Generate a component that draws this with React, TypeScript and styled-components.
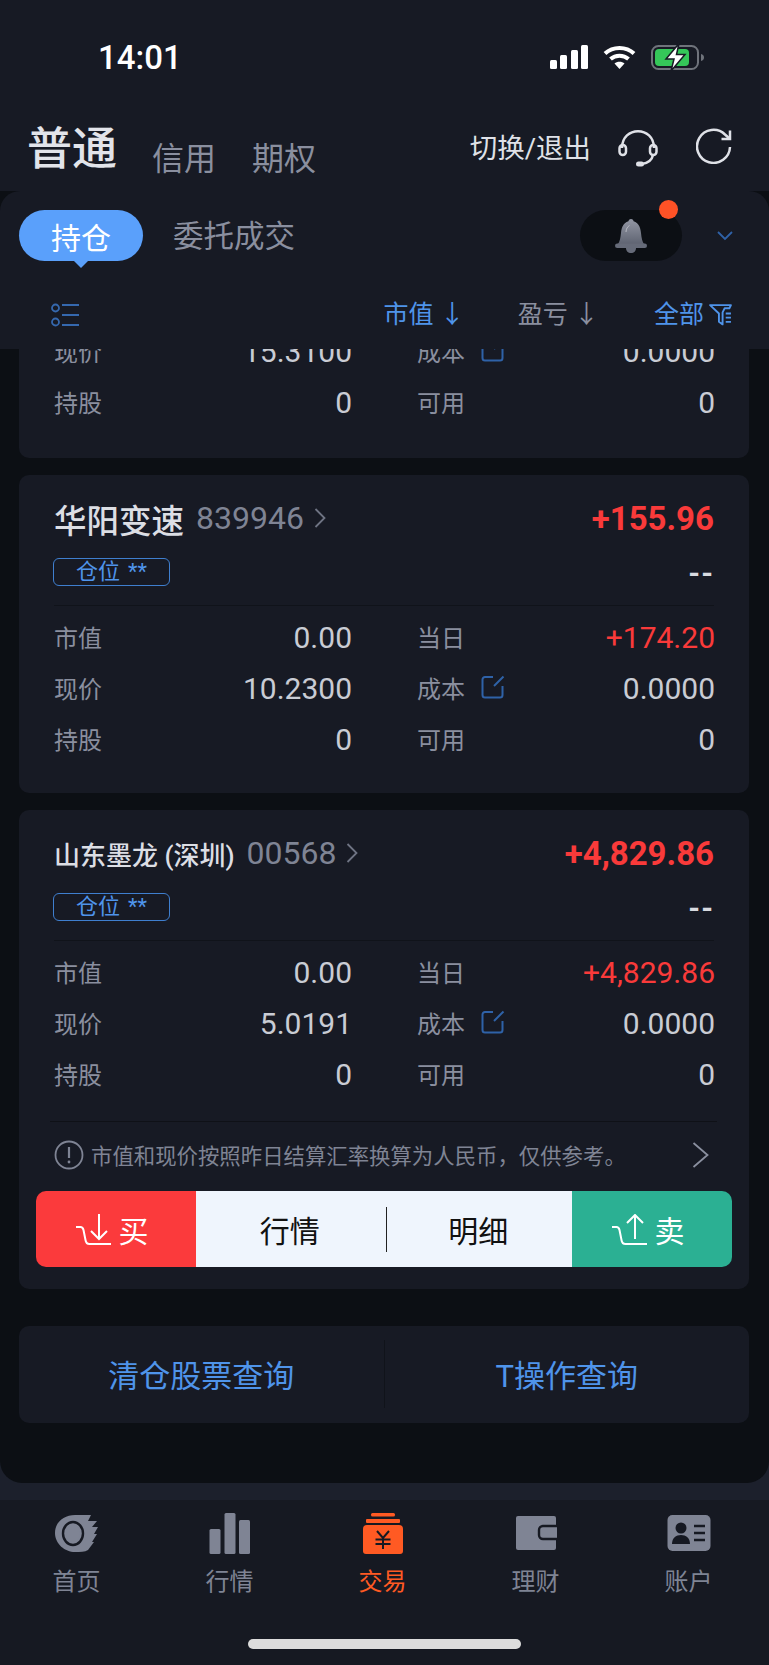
import React from "react";
import styled, { createGlobalStyle } from "styled-components";

const Global = createGlobalStyle`
  html, body { margin: 0; padding: 0; background: #171a24; }
  * { box-sizing: border-box; }
  body { font-family: "Roboto", "Noto Sans CJK SC", sans-serif; }
`;

const CJK = `"Roboto", "Noto Sans CJK SC", sans-serif`;

const Page = styled.div`
  width: 769px;
  height: 1665px;
  display: flex;
  flex-direction: column;
  overflow: hidden;
  background: #1c202c;
  font-family: ${CJK};
`;

const Top = styled.header`
  background: #171a24;
  flex: none;
`;

const StatusBar = styled.div`
  height: 114px;
  display: flex;
  align-items: center;
  justify-content: space-between;
  padding: 0 65px 0 98px;
  color: #fff;
`;

const Clock = styled.span`
  font-size: 33px;
  font-weight: 500;
`;

const StatusIcons = styled.div`
  display: flex;
  align-items: center;
  gap: 15px;
`;

const AccountBar = styled.div`
  height: 77px;
  display: flex;
  align-items: flex-start;
  padding: 9px 37px 0 27px;
`;

const MainTab = styled.span`
  font-size: 45px;
  line-height: 54px;
  font-weight: 500;
  color: #e2e4ea;
  margin-right: 35px;
`;

const SubTab = styled.span`
  font-size: 32px;
  line-height: 44px;
  margin-top: 14px;
  margin-right: 36px;
  color: #8a8f9f;
`;

const Spacer = styled.div`
  flex: 1;
`;

const SwitchLink = styled.span`
  font-size: 27.5px;
  line-height: 40px;
  margin-top: 6px;
  color: #dfe1e7;
  margin-right: 27px;
`;

const HeaderIcon = styled.svg`
  flex: none;
  margin-top: 5px;
`;

const RefreshGlyph = styled(HeaderIcon)`
  margin-left: 38px;
`;

const Body = styled.div`
  flex: none;
  height: 1292px;
  background: #0c0f14;
  border-radius: 0 0 22px 22px;
  display: flex;
  flex-direction: column;
  overflow: hidden;
`;

const StickyPanel = styled.div`
  flex: none;
  height: 158px;
  background: #171a24;
  border-radius: 20px 20px 0 0;
  position: relative;
  z-index: 1;
`;

const TabRow = styled.div`
  height: 89px;
  padding: 19px 0 0 19px;
  display: flex;
  align-items: flex-start;
`;

const ActivePill = styled.div`
  width: 124px;
  height: 51px;
  border-radius: 26px;
  background: #5aa0fb;
  color: #fff;
  font-size: 30px;
  display: flex;
  align-items: center;
  justify-content: center;
  position: relative;
  &::after {
    content: "";
    position: absolute;
    left: 54px;
    bottom: -7px;
    border-left: 8px solid transparent;
    border-right: 8px solid transparent;
    border-top: 8px solid #5aa0fb;
  }
`;

const PlainTab = styled.span`
  margin-left: 30px;
  font-size: 30.5px;
  line-height: 54px;
  color: #8a8f9f;
`;

const BellPill = styled.div`
  width: 102px;
  height: 51px;
  border-radius: 26px;
  background: #0c0f14;
  display: flex;
  align-items: center;
  justify-content: center;
  position: relative;
`;

const Dot = styled.span`
  position: absolute;
  right: 4px;
  top: -10px;
  width: 19px;
  height: 19px;
  border-radius: 50%;
  background: #ff5226;
`;

const Caret = styled.svg`
  margin: 21px 36px 0 35px;
  flex: none;
`;

const SortRow = styled.div`
  height: 69px;
  display: flex;
  align-items: center;
  padding: 0 37px 0 51px;
`;

const SortItem = styled.span<{ $active?: boolean; $gap?: number }>`
  font-size: 25px;
  line-height: 36px;
  color: ${(p) => (p.$active ? "#4f94ea" : "#8a8f9f")};
  margin-right: ${(p) => p.$gap ?? 0}px;
  display: flex;
  align-items: center;
`;

const FilterGlyph = styled.svg`
  margin-left: 5px;
`;

const List = styled.div`
  flex: 1;
  min-height: 0;
  overflow: hidden;
  padding: 0 20px 0 19px;
  display: flex;
  flex-direction: column;
`;

const Card = styled.section<{ $clipped?: boolean }>`
  flex: none;
  background: #171a24;
  border-radius: 10px;
  padding: ${(p) => (p.$clipped ? "0 35px 30px" : "26px 35px 0")};
  margin-top: ${(p) => (p.$clipped ? "-23px" : "0")};
  margin-bottom: 17px;
`;

const TitleRow = styled.div`
  height: 34px;
  display: flex;
  align-items: center;
`;

const StockName = styled.span<{ $small?: boolean }>`
  font-size: ${(p) => (p.$small ? 26 : 32.5)}px;
  font-weight: 500;
  color: #dcdee4;
  margin-right: 12px;
  white-space: nowrap;
`;

const StockCode = styled.span`
  font-size: 32px;
  color: #7f8494;
  margin-right: 10px;
`;

const Profit = styled.span`
  margin-left: auto;
  font-size: 33px;
  font-weight: 700;
  color: #f93a3a;
`;

const BadgeRow = styled.div`
  height: 28px;
  margin-top: 23px;
  display: flex;
  align-items: center;
  justify-content: space-between;
`;

const Badge = styled.span`
  width: 117px;
  height: 28px;
  border: 1px solid #3f7fcf;
  border-radius: 6px;
  color: #4f94ea;
  font-size: 22px;
  line-height: 25px;
  display: flex;
  justify-content: center;
  gap: 8px;
  margin-left: -1px;
`;

const Dashes = styled.span`
  font-size: 30px;
  font-weight: 700;
  letter-spacing: 1px;
  color: #d8dae0;
`;

const Rule = styled.div`
  height: 1px;
  background: #10131a;
  margin-top: 19px;
  margin-bottom: 6px;
`;

const Grid = styled.div<{ $flush?: boolean }>`
  display: grid;
  grid-template-columns: 298px 298px;
  column-gap: 65px;
  padding-bottom: ${(p) => (p.$flush ? 0 : 28)}px;
`;

const Cell = styled.div`
  height: 51px;
  display: flex;
  align-items: center;
  justify-content: space-between;
`;

const Label = styled.span`
  font-size: 24px;
  color: #8a8f9f;
  display: flex;
  align-items: center;
  gap: 16px;
  padding-bottom: 3px;
`;

const Value = styled.span<{ $up?: boolean }>`
  font-size: 30px;
  color: ${(p) => (p.$up ? "#f93a3a" : "#c9ccd4")};
`;

const NoticeRule = styled.div`
  height: 1px;
  background: #0f1117;
  margin: -7px -3px 0 -4px;
`;

const Notice = styled.div`
  height: 65px;
  display: flex;
  align-items: center;
  color: #7f8494;
  font-size: 21.4px;
  padding-right: 5px;
`;

const NoticeText = styled.span`
  margin-left: 7px;
  flex: 1;
  white-space: nowrap;
`;

const ActionBar = styled.div`
  display: flex;
  height: 76px;
  margin: 4px -18px 0 -18px;
  border-radius: 10px;
  overflow: hidden;
  font-size: 30px;
`;

const TradeButton = styled.div<{ $kind: "buy" | "sell" }>`
  flex: none;
  width: 160px;
  background: ${(p) => (p.$kind === "buy" ? "#fb3a3c" : "#2bb093")};
  color: #fff;
  display: flex;
  align-items: center;
  justify-content: center;
  gap: 8px;
  padding-right: 8px;
`;

const Middle = styled.div`
  flex: 1;
  background: #eff5fd;
  display: flex;
  align-items: center;
  color: #111;
`;

const MiddleItem = styled.span`
  flex: 1;
  text-align: center;
`;

const MiddleRule = styled.span`
  width: 1px;
  height: 45px;
  background: #222;
  flex: none;
  margin: 0 -2px 0 2px;
`;

const CardFoot = styled.div`
  height: 22px;
`;

const QueryCard = styled.div`
  flex: none;
  height: 97px;
  margin-top: 20px;
  padding-bottom: 2px;
  background: #171a24;
  border-radius: 10px;
  display: flex;
  align-items: center;
  color: #4f94ea;
  font-size: 31px;
`;

const QueryItem = styled.span`
  flex: 1;
  text-align: center;
`;

const QueryRule = styled.span`
  width: 1px;
  height: 68px;
  background: #10131a;
  flex: none;
`;

const Gutter = styled.div`
  flex: none;
  height: 17px;
`;

const TabBar = styled.nav`
  flex: 1;
  background: #161922;
  display: flex;
  flex-direction: column;
`;

const TabItems = styled.div`
  display: grid;
  grid-template-columns: repeat(5, 1fr);
  padding: 11px 4px 0 0;
`;

const TabItem = styled.div<{ $active?: boolean }>`
  display: flex;
  flex-direction: column;
  align-items: center;
  color: ${(p) => (p.$active ? "#ff5a23" : "#7f8494")};
  font-size: 24px;
  line-height: 30px;
`;

const TabGlyph = styled.svg`
  margin-bottom: 12px;
`;

const HomeIndicator = styled.div`
  width: 273px;
  height: 10px;
  border-radius: 5px;
  background: #dcdcdc;
  margin: 42px auto 0;
`;

const Signal = () => (
  <svg width="38" height="24" viewBox="0 0 38 24" fill="#fff">
    <rect x="0" y="15" width="7" height="9" rx="1.5" />
    <rect x="10" y="10" width="7" height="14" rx="1.5" />
    <rect x="21" y="5" width="7" height="19" rx="1.5" />
    <rect x="31" y="0" width="7" height="24" rx="1.5" />
  </svg>
);

const Wifi = () => (
  <svg width="33" height="24" viewBox="0 0 33 24" fill="none" stroke="#fff" strokeWidth="4">
    <path d="M2 8.500C10 1 23 1 31 8.500" />
    <path d="M7.500 14C12.500 9.600 20.500 9.600 25.500 14" />
    <path d="M16.500 24L11.500 18.500C14 16.300 19 16.300 21.500 18.500Z" fill="#fff" stroke="none" />
  </svg>
);

const Battery = () => (
  <svg width="53" height="28" viewBox="0 0 53 28" fill="none">
    <rect x="1" y="3" width="46" height="23" rx="6.500" stroke="#6f737b" strokeWidth="2" />
    <rect x="4" y="6" width="34" height="17" rx="4" fill="#35c759" />
    <path d="M50 11c2 .5 3 1.500 3 3.500s-1 3-3 3.500z" fill="#6f737b" />
    <path d="M28 0.500L15 16h8l-3 12 14-16.500h-8.500z" fill="#fff" stroke="#171a24" strokeWidth="1.500" />
  </svg>
);

const Headset = () => (
  <HeaderIcon width="40" height="40" viewBox="0 0 40 40" fill="none" stroke="#dfe1e7" strokeWidth="2.500">
    <path d="M4 20C4 -2.500 36 -2.500 36 20" />
    <rect x="1.500" y="17" width="6.500" height="10" rx="3.250" />
    <rect x="32" y="17" width="6.500" height="10" rx="3.250" />
    <path d="M35 27c-1 5-5 8-11 9" />
    <rect x="18" y="33.500" width="8" height="5" rx="2.500" fill="#dfe1e7" stroke="none" />
  </HeaderIcon>
);

const Refresh = () => (
  <RefreshGlyph width="36" height="36" viewBox="0 0 36 36" fill="none" stroke="#dfe1e7" strokeWidth="2.500">
    <path d="M34 19A16.500 16.500 0 1 1 29 6.500L34 11" />
    <path d="M34 2.500V11h-8.500" />
  </RefreshGlyph>
);

const Bell = () => (
  <svg width="32" height="34" viewBox="0 0 32 34">
    <defs>
      <linearGradient id="bellFill" x1="0" y1="0" x2="0" y2="1">
        <stop offset="0" stopColor="#8f93a0" />
        <stop offset="1" stopColor="#5f6472" />
      </linearGradient>
    </defs>
    <circle cx="16" cy="2.500" r="2.500" fill="#8f93a0" />
    <path d="M16 2C9 2 6.500 8 6 14c-.4 5-1.500 9-3 11h26c-1.500-2-2.600-6-3-11C25.500 8 23 2 16 2z" fill="url(#bellFill)" />
    <rect x="0" y="24.500" width="32" height="4.500" rx="2.250" fill="#666b79" />
    <path d="M11 29h10c0 3-2 5-5 5s-5-2-5-5z" fill="#666b79" />
    <path d="M11 13c0-3 1.500-5.500 3.500-6.500" stroke="#b7bac3" strokeWidth="1" fill="none" />
  </svg>
);

const ListIcon = () => (
  <svg width="29" height="24" viewBox="0 0 29 24" fill="none" stroke="#3568ae" strokeWidth="1.800">
    <circle cx="4.500" cy="5" r="3.500" />
    <circle cx="4.500" cy="19" r="3.500" />
    <path d="M11 2h17M11 12h17M11 22h17" />
  </svg>
);

const Filter = () => (
  <FilterGlyph width="23" height="23" viewBox="0 0 22 22" fill="none" stroke="#4f94ea" strokeWidth="1.800">
    <path d="M1 2h20l-1.500 3H15l-2 4v11.500L9.500 18V10z" strokeLinejoin="round" />
    <path d="M16 10h5M16 14h5M16 18h5" />
  </FilterGlyph>
);

const Chevron = ({ size = 12, h = 20, color = "#6f7484" }: { size?: number; h?: number; color?: string }) => (
  <svg width={size} height={h} viewBox={`0 0 ${size} ${h}`} fill="none" stroke={color} strokeWidth="1.800">
    <path d={`M1.500 1L${size - 1.500} ${h / 2}L1.500 ${h - 1}`} />
  </svg>
);

const Edit = () => (
  <svg width="24" height="24" viewBox="0 0 24 24" fill="none" stroke="#2f62a8" strokeWidth="2">
    <path d="M12 2H4a2.500 2.500 0 0 0-2.500 2.500V20A2.500 2.500 0 0 0 4 22.500h15a2.500 2.500 0 0 0 2.500-2.500v-9" />
    <path d="M13 11L22.500 1.500" />
  </svg>
);

const Info = () => (
  <svg width="30" height="30" viewBox="0 0 30 30" fill="none" stroke="#7f8494" strokeWidth="1.800">
    <circle cx="15" cy="15" r="13.500" />
    <path d="M15 7v11" strokeWidth="2.200" />
    <circle cx="15" cy="22" r="1.400" fill="#7f8494" stroke="none" />
  </svg>
);

const BuyIcon = () => (
  <svg width="35" height="31" viewBox="0 0 35 31" fill="none" stroke="#fff" strokeWidth="2">
    <path d="M0 13h4.500c2 0 2.500 1 3 3l2 10c.5 3 1.500 4 4 4H35" />
    <path d="M23 0v25M15 17l8 8 8-8" />
  </svg>
);

const SellIcon = () => (
  <svg width="35" height="31" viewBox="0 0 35 31" fill="none" stroke="#fff" strokeWidth="2">
    <path d="M0 13h4.500c2 0 2.500 1 3 3l2 10c.5 3 1.500 4 4 4H35" />
    <path d="M23 25V1M15 9l8-8 8 8" />
  </svg>
);

const HomeGlyph = () => (
  <TabGlyph width="44" height="44" viewBox="0 0 44 44">
    <path d="M20 4h16l-3 6h9l-5 6h6l-4 7h3l-5 8h2l-6 8c-3 2-8 2-13 2C10 41 0 33 0 22S9 4 20 4z" fill="#7f8494" />
    <ellipse cx="18" cy="22.500" rx="10" ry="11.500" fill="none" stroke="#161922" strokeWidth="2.400" />
    <ellipse cx="18" cy="22.500" rx="7" ry="8.500" fill="#7f8494" />
  </TabGlyph>
);

const BarsGlyph = () => (
  <TabGlyph width="44" height="44" viewBox="0 0 44 44" fill="#7f8494">
    <rect x="1.500" y="18" width="11" height="25" rx="1.500" />
    <rect x="16.500" y="2" width="11" height="41" rx="1.500" />
    <rect x="31" y="9" width="11" height="34" rx="1.500" />
  </TabGlyph>
);

const TradeGlyph = () => (
  <TabGlyph width="44" height="44" viewBox="0 0 44 44">
    <rect x="10" y="2" width="24" height="3.500" rx="1.500" fill="#ff5a23" />
    <rect x="5" y="8" width="34" height="4" rx="1" fill="#ff5a23" />
    <path d="M6 14h32a4 4 0 0 1 4 4v22a3 3 0 0 1-3 3H5a3 3 0 0 1-3-3V18a4 4 0 0 1 4-4z" fill="#ff5a23" />
    <path d="M16 20l6 7 6-7M22 27v11M14.500 28.500h15M14.500 33h15" fill="none" stroke="#161922" strokeWidth="2" />
  </TabGlyph>
);

const WalletGlyph = () => (
  <TabGlyph width="44" height="44" viewBox="0 0 44 44">
    <path d="M4 5h36a2 2 0 0 1 2 2v30a2 2 0 0 1-2 2H4a2 2 0 0 1-2-2V7a2 2 0 0 1 2-2z" fill="#7f8494" />
    <path d="M43 15H29a4 4 0 0 0-4 4v5a4 4 0 0 0 4 4h14" fill="#7f8494" stroke="#161922" strokeWidth="2.400" />
  </TabGlyph>
);

const AccountGlyph = () => (
  <TabGlyph width="44" height="44" viewBox="0 0 44 44">
    <rect x="0.500" y="4" width="43" height="36" rx="5" fill="#7f8494" />
    <circle cx="14" cy="17" r="5.500" fill="#161922" />
    <path d="M5 33c0-6 4-9 9-9s9 3 9 9z" fill="#161922" />
    <path d="M27 15h11M27 22h11M27 29h11" stroke="#161922" strokeWidth="2.400" />
  </TabGlyph>
);

const Rows = ({ mv, day, price }: { mv: string; day: string; price: string }) => (
  <Grid>
    <Cell><Label>市值</Label><Value>{mv}</Value></Cell>
    <Cell><Label>当日</Label><Value $up>{day}</Value></Cell>
    <Cell><Label>现价</Label><Value>{price}</Value></Cell>
    <Cell><Label>成本 <Edit /></Label><Value>0.0000</Value></Cell>
    <Cell><Label>持股</Label><Value>0</Value></Cell>
    <Cell><Label>可用</Label><Value>0</Value></Cell>
  </Grid>
);

const Head = ({ name, code, profit, small }: { name: string; code: string; profit: string; small?: boolean }) => (
  <>
    <TitleRow>
      <StockName $small={small}>{name}</StockName>
      <StockCode>{code}</StockCode>
      <Chevron />
      <Profit>{profit}</Profit>
    </TitleRow>
    <BadgeRow>
      <Badge>仓位 <span>**</span></Badge>
      <Dashes>--</Dashes>
    </BadgeRow>
    <Rule />
  </>
);

export default function App() {
  return (
    <Page>
      <Global />
      <Top>
        <StatusBar>
          <Clock>14:01</Clock>
          <StatusIcons>
            <Signal />
            <Wifi />
            <Battery />
          </StatusIcons>
        </StatusBar>
        <AccountBar>
          <MainTab>普通</MainTab>
          <SubTab>信用</SubTab>
          <SubTab>期权</SubTab>
          <Spacer />
          <SwitchLink>切换/退出</SwitchLink>
          <Headset />
          <Refresh />
        </AccountBar>
      </Top>
      <Body>
        <StickyPanel>
          <TabRow>
            <ActivePill>持仓</ActivePill>
            <PlainTab>委托成交</PlainTab>
            <Spacer />
            <BellPill>
              <Bell />
              <Dot />
            </BellPill>
            <Caret width="16" height="10" viewBox="0 0 16 10" fill="none" stroke="#2f62a8" strokeWidth="1.800">
              <path d="M1 1l7 7 7-7" />
            </Caret>
          </TabRow>
          <SortRow>
            <ListIcon />
            <Spacer />
            <SortItem $active $gap={53}>市值 ↓</SortItem>
            <SortItem $gap={55}>盈亏 ↓</SortItem>
            <SortItem $active>全部<Filter /></SortItem>
          </SortRow>
        </StickyPanel>
        <List>
          <Card $clipped>
            <Grid $flush>
              <Cell><Label>现价</Label><Value>15.3100</Value></Cell>
              <Cell><Label>成本 <Edit /></Label><Value>0.0000</Value></Cell>
              <Cell><Label>持股</Label><Value>0</Value></Cell>
              <Cell><Label>可用</Label><Value>0</Value></Cell>
            </Grid>
          </Card>
          <Card>
            <Head name="华阳变速" code="839946" profit="+155.96" />
            <Rows mv="0.00" day="+174.20" price="10.2300" />
          </Card>
          <Card>
            <Head name="山东墨龙 (深圳)" code="00568" profit="+4,829.86" small />
            <Rows mv="0.00" day="+4,829.86" price="5.0191" />
            <NoticeRule />
            <Notice>
              <Info />
              <NoticeText>市值和现价按照昨日结算汇率换算为人民币，仅供参考。</NoticeText>
              <Chevron size={17} h={26} color="#8a8f9f" />
            </Notice>
            <ActionBar>
              <TradeButton $kind="buy"><BuyIcon />买</TradeButton>
              <Middle>
                <MiddleItem>行情</MiddleItem>
                <MiddleRule />
                <MiddleItem>明细</MiddleItem>
              </Middle>
              <TradeButton $kind="sell"><SellIcon />卖</TradeButton>
            </ActionBar>
            <CardFoot />
          </Card>
          <QueryCard>
            <QueryItem>清仓股票查询</QueryItem>
            <QueryRule />
            <QueryItem>T操作查询</QueryItem>
          </QueryCard>
        </List>
      </Body>
      <Gutter />
      <TabBar>
        <TabItems>
          <TabItem><HomeGlyph />首页</TabItem>
          <TabItem><BarsGlyph />行情</TabItem>
          <TabItem $active><TradeGlyph />交易</TabItem>
          <TabItem><WalletGlyph />理财</TabItem>
          <TabItem><AccountGlyph />账户</TabItem>
        </TabItems>
        <HomeIndicator />
      </TabBar>
    </Page>
  );
}
